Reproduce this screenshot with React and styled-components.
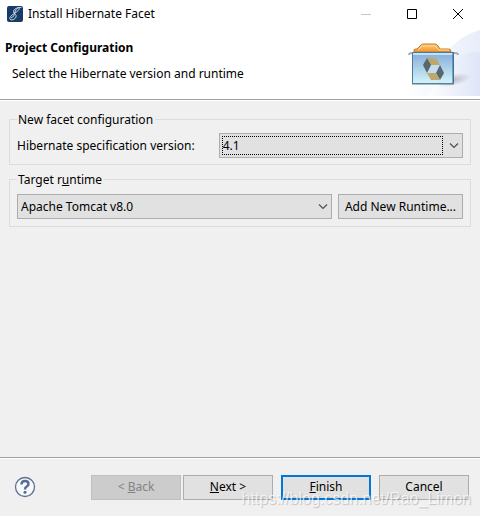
import { useState } from "react";
import styled, { createGlobalStyle, css } from "styled-components";

const GlobalStyle = createGlobalStyle`
  * {
    box-sizing: border-box;
  }

  body {
    margin: 0;
    background: #f0f0f0;
    color: #000;
    font-family: "Noto Sans", "Open Sans", sans-serif;
    font-size: 12px;
    line-height: 18px;
  }

  button, select {
    font: inherit;
    color: inherit;
  }
`;

const Dialog = styled.div`
  position: relative;
  display: flex;
  flex-direction: column;
  min-height: 100vh;
`;

const TitleBar = styled.header`
  display: flex;
  align-items: center;
  height: 28px;
  padding-left: 7px;
  background: #fff;
`;

const WindowTitle = styled.span`
  flex: 1;
  margin-left: 5px;
`;

const WindowControls = styled.div`
  display: flex;
  gap: 2px;
`;

const WindowButton = styled.button`
  display: flex;
  align-items: center;
  justify-content: center;
  width: 44px;
  height: 28px;
  padding: 0;
  border: 0;
  background: none;
`;

const Banner = styled.div`
  display: flex;
  justify-content: space-between;
  height: 72px;
  padding-top: 2px;
  background: #fff;
  border-bottom: 1px solid #a0a0a0;
`;

const BannerText = styled.div`
  padding: 9px 0 0 5px;
`;

const Heading = styled.h1`
  margin: 0;
  font-size: 12px;
  font-weight: 700;
  line-height: 18px;
`;

const Description = styled.p`
  margin: 8px 0 0 7px;
`;

const Content = styled.main`
  display: flex;
  flex: 1;
  flex-direction: column;
  gap: 6px;
  padding: 10px 9px;
  border-top: 1px solid #fff;
`;

const Group = styled.fieldset`
  min-width: 0;
  margin: 0;
  padding: ${({ $compact }) => ($compact ? "5px 7px 6px" : "6px 7px 7px")};
  border: 1px solid #dcdcdc;
`;

const Legend = styled.legend`
  padding: 0 2px 0 1px;
  line-height: 17px;
`;

const Row = styled.div`
  display: flex;
  align-items: center;
  gap: ${({ $gap }) => $gap}px;
`;

const ComboBox = styled.div`
  position: relative;
  flex: 1;
  height: 25px;

  svg {
    position: absolute;
    top: 9px;
    right: 4px;
    pointer-events: none;
  }

  ${({ $focused }) => $focused && css`
    &::after {
      content: "";
      position: absolute;
      inset: 3px 20px 3px 3px;
      border: 1px dotted #000;
      pointer-events: none;
    }
  `}
`;

const Select = styled.select`
  width: 100%;
  height: 100%;
  padding: 0 24px 0 3px;
  border: 1px solid #adadad;
  border-radius: 0;
  outline: 0;
  background: #e1e1e1;
  appearance: none;
`;

const Button = styled.button`
  width: ${({ $width = 90 }) => $width}px;
  height: 25px;
  padding: 0;
  border: ${({ $primary }) => ($primary ? "2px solid #0078d7" : "1px solid #adadad")};
  background: #e1e1e1;
  white-space: nowrap;

  &:disabled {
    border-color: #bfbfbf;
    background: #ccc;
    color: #838383;
  }
`;

const Footer = styled.footer`
  display: flex;
  align-items: center;
  gap: 8px;
  height: 59px;
  padding: 0 11px 0 14px;
  border-top: 1px solid #a0a0a0;
  box-shadow: inset 0 1px #fff;
`;

const HelpButton = styled.button`
  display: flex;
  margin-right: auto;
  padding: 0;
  border: 0;
  background: none;
`;

const Watermark = styled.div`
  position: absolute;
  right: 9px;
  bottom: 8px;
  color: rgba(255, 255, 255, 0.7);
  font-family: "Liberation Sans", Arial, sans-serif;
  font-size: 16px;
  text-shadow: 1px 1px 1px rgba(0, 0, 0, 0.2);
  pointer-events: none;
`;

function AppIcon() {
  return (
    <svg width="16" height="16" viewBox="0 0 16 16" aria-hidden="true">
      <rect width="16" height="16" rx="2" fill="#173c68" />
      <path
        d="M14.500 1.500C11 1 6.500 3 6.500 5.500S10 8.500 9 11s-5 4-6 2 2-4 5-6 5-4 4-5-3 1-4 4-1 5-4 6"
        fill="none"
        stroke="#dce6f1"
        strokeWidth=".9"
      />
    </svg>
  );
}

function Chevron() {
  return (
    <svg width="10" height="8" viewBox="0 0 10 8" aria-hidden="true">
      <path d="M1 1.500l4 4 4-4" fill="none" stroke="#505050" strokeWidth="1.200" />
    </svg>
  );
}

function BannerArt() {
  return (
    <svg width="75" height="66" viewBox="0 0 75 66" aria-hidden="true">
      <defs>
        <linearGradient id="swoosh" x1="0" x2="1">
          <stop offset="0" stopColor="#fff" />
          <stop offset="1" stopColor="#dce3f6" />
        </linearGradient>
        <linearGradient id="folder" x1="0" y1="0" x2="0" y2="1">
          <stop offset="0" stopColor="#86acd9" />
          <stop offset="1" stopColor="#d3f4f7" />
        </linearGradient>
        <linearGradient id="tab" x1="0" y1="0" x2="0" y2="1">
          <stop offset="0" stopColor="#ffc875" />
          <stop offset="1" stopColor="#eb9a32" />
        </linearGradient>
        <radialGradient id="shade">
          <stop offset="0" stopColor="#a6a2ad" stopOpacity=".7" />
          <stop offset="1" stopColor="#a6a2ad" stopOpacity="0" />
        </radialGradient>
      </defs>
      <path d="M75 0Q54 6 42 22L0 66h75z" fill="url(#swoosh)" opacity=".65" />
      <path d="M75 22Q53 22 42 38L22 66h53z" fill="url(#swoosh)" opacity=".8" />
      <ellipse cx="48" cy="50" rx="18" ry="6" fill="url(#shade)" transform="rotate(-12 48 50)" />
      <path d="M9 22v-2q0-1 2-1h1l4-4q1-1 3-1h11q2 0 3 2l2 3h9q2 0 2 3z" fill="url(#tab)" stroke="#c37a22" />
      <path d="M13 20l4-4h13l4 4h10" fill="none" stroke="#ffd99a" />
      <path d="M4 25q0-2 3-2h43q3 0 3 2" fill="none" stroke="#a9adb2" strokeWidth="2" />
      <path d="M7.500 22.500h41v31h-41z" fill="url(#folder)" stroke="#467ba9" />
      <path d="M8 24h40" stroke="#c6e1f6" strokeWidth="2" />
      <path d="M48 22v32" stroke="#336791" />
      <path d="M7 54h42" stroke="#687e90" />
      <path d="M26 35h9l-4 8h-9z" fill="#c5dcec" />
      <path d="M22 28h9l4 7h-9z" fill="#bba86d" />
      <path d="M22 28l4 7-4 8-4-8z" fill="#57666f" />
      <path d="M35 35l4 8-4 7-4-7z" fill="#57666f" />
      <path d="M22 43h9l4 7h-9z" fill="#bba86d" />
    </svg>
  );
}

function HelpIcon() {
  return (
    <svg width="22" height="22" viewBox="0 0 22 22" aria-hidden="true">
      <circle cx="11" cy="11" r="9.500" fill="#f6f8fb" stroke="#5f7191" strokeWidth="1.300" />
      <path d="M7.500 8.500q0-3.500 3.500-3.500t3.500 3q0 1.500-1.800 2.600T11 13.500" fill="none" stroke="#536b96" strokeWidth="2.400" />
      <circle cx="11" cy="16.300" r="1.500" fill="#536b96" />
    </svg>
  );
}

export default function App() {
  const [version, setVersion] = useState("4.1");
  const [runtime, setRuntime] = useState("Apache Tomcat v8.0");

  return <>
    <GlobalStyle />
    <Dialog>
      <TitleBar>
        <AppIcon />
        <WindowTitle>Install Hibernate Facet</WindowTitle>
        <WindowControls>
          <WindowButton aria-label="Minimize" disabled>
            <svg width="10" height="10"><path d="M0 5.500h10" stroke="#c8c8c8" /></svg>
          </WindowButton>
          <WindowButton aria-label="Maximize">
            <svg width="10" height="10"><path d="M.5.5h9v9h-9z" fill="none" stroke="#000" /></svg>
          </WindowButton>
          <WindowButton aria-label="Close">
            <svg width="10" height="10"><path d="M0 0l10 10M10 0L0 10" stroke="#000" /></svg>
          </WindowButton>
        </WindowControls>
      </TitleBar>

      <Banner>
        <BannerText>
          <Heading>Project Configuration</Heading>
          <Description>Select the Hibernate version and runtime</Description>
        </BannerText>
        <BannerArt />
      </Banner>

      <Content>
        <Group $compact>
          <Legend>New facet configuration</Legend>
          <Row $gap={24}>
            <label htmlFor="version">Hibernate specification version:</label>
            <ComboBox $focused>
              <Select id="version" value={version} onChange={(e) => setVersion(e.target.value)}>
                <option>4.1</option>
              </Select>
              <Chevron />
            </ComboBox>
          </Row>
        </Group>

        <Group>
          <Legend id="runtime-label">Target r<u>u</u>ntime</Legend>
          <Row $gap={6}>
            <ComboBox>
              <Select aria-labelledby="runtime-label" value={runtime} onChange={(e) => setRuntime(e.target.value)}>
                <option>Apache Tomcat v8.0</option>
              </Select>
              <Chevron />
            </ComboBox>
            <Button $width={125}>Add New Runtime...</Button>
          </Row>
        </Group>
      </Content>

      <Footer>
        <HelpButton aria-label="Help"><HelpIcon /></HelpButton>
        <Row $gap={2}>
          <Button disabled>&lt; <u>B</u>ack</Button>
          <Button><u>N</u>ext &gt;</Button>
        </Row>
        <Button $primary><u>F</u>inish</Button>
        <Button>Cancel</Button>
      </Footer>

      <Watermark>https://blog.csdn.net/Rao_Limon</Watermark>
    </Dialog>
  </>;
}
